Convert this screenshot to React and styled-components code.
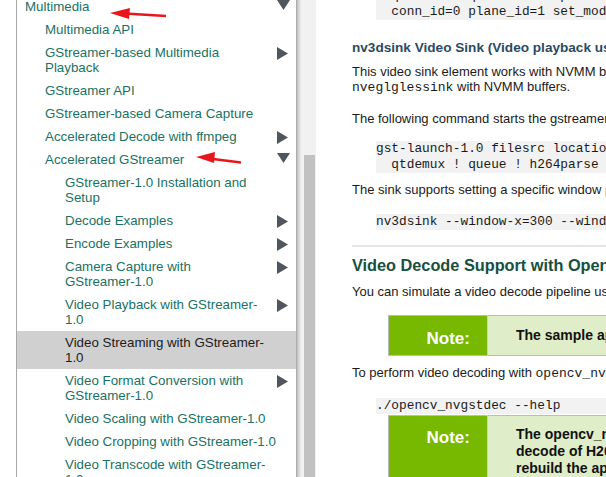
import React from "react";
import styled, { createGlobalStyle } from "styled-components";

const Global = createGlobalStyle`
  html, body { margin: 0; padding: 0; background: #fff; }
  body { font-family: "Liberation Sans", Arial, sans-serif; }
`;

const Page = styled.div`
  display: flex;
  width: 606px;
  height: 477px;
  overflow: hidden;
  background: #fff;
`;

const Gutter = styled.div`
  width: 16px;
  flex: none;
`;

const Sidebar = styled.nav`
  width: 279px;
  flex: none;
  border-left: 1px solid #a8a8a8;
  overflow: hidden;
  position: relative;
`;

const NavList = styled.ul`
  list-style: none;
  margin: -5px 0 0;
  padding: 0;
`;

const NavItem = styled.li`
  position: relative;
  padding: 4px ${(p) => (p.$toggle ? 35 : 17)}px 4px ${(p) => p.$indent}px;
  font-size: 13.33px;
  line-height: 15px;
  color: ${(p) => (p.$current ? "#1c1c1c" : "#1a7263")};
  background: ${(p) => (p.$current ? "#d0d0d0" : "transparent")};
`;

const Toggle = styled.svg`
  position: absolute;
  right: ${(p) => (p.$down ? 6 : 8)}px;
  top: ${(p) => (p.$down ? 5 : 6)}px;
  fill: #4f565d;
`;

const Edge = styled.div`
  width: 5px;
  flex: none;
  background: linear-gradient(to right, #a3a3a3, #cfcfcf 40%, #ececec);
`;

const Track = styled.div`
  width: 15px;
  flex: none;
  background: #f1f1f1;
  display: flex;
  justify-content: center;
  padding-top: 155px;
  box-sizing: border-box;
`;

const Thumb = styled.div`
  width: 11px;
  margin-left: 1px;
  height: 400px;
  background: #c1c1c1;
`;

const Main = styled.main`
  flex: 1;
  min-width: 0;
  overflow: hidden;
  padding-left: 36px;
  color: #1a1a1a;
`;

const Pre = styled.pre`
  margin: ${(p) => p.$mt}px 0 0 24px;
  padding: 0;
  background: #f2f2f2;
  font-family: "Liberation Mono", "Courier New", monospace;
  font-size: 12.8px;
  line-height: 16px;
  color: #1a1a1a;
  white-space: pre;
`;

const H3 = styled.h3`
  margin: ${(p) => p.$mt}px 0 0;
  font-size: 13.6px;
  line-height: 18px;
  font-weight: bold;
  color: #2a4a63;
  white-space: nowrap;
`;

const H2 = styled.h2`
  margin: ${(p) => p.$mt}px 0 0;
  font-size: 16.3px;
  line-height: 22px;
  font-weight: bold;
  color: #184f3e;
  white-space: nowrap;
`;

const P = styled.p`
  margin: ${(p) => p.$mt}px 0 0;
  font-size: 13px;
  line-height: 15px;
  white-space: nowrap;
`;

const Code = styled.code`
  font-family: "Liberation Mono", "Courier New", monospace;
  font-size: 13px;
`;

const Rule = styled.hr`
  margin: ${(p) => p.$mt}px 0 0;
  border: 0;
  border-top: 2px solid #e3e5e6;
`;

const NoteTable = styled.table`
  margin: ${(p) => p.$mt}px 0 0 36px;
  border-collapse: collapse;
  border: 1px solid #bcbcbc;
  width: 420px;
  table-layout: fixed;
`;

const NoteLabel = styled.td`
  width: 99px;
  background: #76b900;
  color: #fff;
  font-size: 17px;
  font-weight: bold;
  text-align: right;
  vertical-align: top;
  padding: ${(p) => p.$pt}px 17px 0 0;
  border-right: 1px solid #c6d9a8;
  height: ${(p) => p.$h}px;
  box-sizing: border-box;
`;

const NoteBody = styled.td`
  background: #dfeec8;
  color: #111;
  font-size: 14px;
  line-height: 17px;
  font-weight: bold;
  vertical-align: top;
  padding: ${(p) => p.$pt}px 0 0 28px;
  white-space: nowrap;
  overflow: hidden;
`;

const Annotations = styled.svg`
  position: absolute;
  left: 0;
  top: 0;
  pointer-events: none;
`;

const RightArrow = ({ down }) =>
  down ? (
    <Toggle $down width="13" height="10" viewBox="0 0 13 10">
      <polygon points="0,0 13,0 6.5,10" />
    </Toggle>
  ) : (
    <Toggle width="11" height="13" viewBox="0 0 11 13">
      <polygon points="0,0 11,6.5 0,13" />
    </Toggle>
  );

const items = [
  { t: "Multimedia", i: 8, a: "down" },
  { t: "Multimedia API", i: 28 },
  { t: "GStreamer-based Multimedia Playback", i: 28, a: "right" },
  { t: "GStreamer API", i: 28 },
  { t: "GStreamer-based Camera Capture", i: 28 },
  { t: "Accelerated Decode with ffmpeg", i: 28, a: "right" },
  { t: "Accelerated GStreamer", i: 28, a: "down" },
  { t: "GStreamer-1.0 Installation and Setup", i: 48 },
  { t: "Decode Examples", i: 48, a: "right" },
  { t: "Encode Examples", i: 48, a: "right" },
  { t: "Camera Capture with GStreamer-1.0", i: 48, a: "right" },
  { t: "Video Playback with GStreamer-1.0", i: 48, a: "right" },
  { t: "Video Streaming with GStreamer-1.0", i: 48, current: true },
  { t: "Video Format Conversion with GStreamer-1.0", i: 48, a: "right" },
  { t: "Video Scaling with GStreamer-1.0", i: 48 },
  { t: "Video Cropping with GStreamer-1.0", i: 48 },
  { t: "Video Transcode with GStreamer-1.0", i: 48 },
];

export default function App() {
  return (
    <>
      <Global />
      <Page>
        <Gutter />
        <Sidebar>
          <NavList>
            {items.map((it) => (
              <NavItem key={it.t} $indent={it.i} $current={it.current} $toggle={!!it.a}>
                {it.t}
                {it.a && <RightArrow down={it.a === "down"} />}
              </NavItem>
            ))}
          </NavList>
          <Annotations width="279" height="477" viewBox="0 0 279 477">
            <g fill="#e8171c" stroke="#e8171c">
              <line x1="108" y1="13.5" x2="149" y2="16" strokeWidth="2.4" />
              <polygon points="93,13 113,8 112,19" stroke="none" />
              <line x1="192" y1="158.5" x2="224" y2="162.5" strokeWidth="2.4" />
              <polygon points="179,157 198,152 197,163" stroke="none" />
            </g>
          </Annotations>
        </Sidebar>
        <Edge />
        <Track>
          <Thumb />
        </Track>
        <Main>
          <Pre $mt={-12}>
            {"  qtdemux ! queue ! h264parse ! nvv4l2decoder ! nvdrmvideosink \\\n  conn_id=0 plane_id=1 set_mode=0 -e"}
          </Pre>
          <H3 $mt={19}>nv3dsink Video Sink (Video playback using 3D graphics API)</H3>
          <P $mt={7}>
            This video sink element works with NVMM buffers and renders using 3D graphics API.
            <br />
            <Code>nveglglessink</Code> with NVMM buffers.
          </P>
          <P $mt={16}>The following command starts the gstreamer pipeline using nv3dsink:</P>
          <Pre $mt={15}>
            {"gst-launch-1.0 filesrc location=<filename_h264.mp4> ! \\\n  qtdemux ! queue ! h264parse ! nvv4l2decoder ! nv3dsink -e"}
          </Pre>
          <P $mt={9}>The sink supports setting a specific window position and dimensions using the properties:</P>
          <Pre $mt={17}>{"nv3dsink --window-x=300 --window-y=300 --window-width=512 --window-height=512"}</Pre>
          <Rule $mt={15} />
          <H2 $mt={7}>Video Decode Support with OpenCV</H2>
          <P $mt={8}>You can simulate a video decode pipeline using the GStreamer-1.0 based OpenCV sample.</P>
          <NoteTable $mt={16}>
            <tbody>
              <tr>
                <NoteLabel $pt={13} $h={40}>Note:</NoteLabel>
                <NoteBody $pt={11}>The sample application is available in the Jetson Linux sources.</NoteBody>
              </tr>
            </tbody>
          </NoteTable>
          <P $mt={9}>
            To perform video decoding with <Code>opencv_nvgstdec</Code>, run the following command:
          </P>
          <Pre $mt={17}>{"./opencv_nvgstdec --help"}</Pre>
          <NoteTable $mt={1}>
            <tbody>
              <tr>
                <NoteLabel $pt={12} $h={120}>Note:</NoteLabel>
                <NoteBody $pt={10}>
                  The opencv_nvgstdec application currently supports only
                  <br />
                  decode of H264. To decode other formats you must
                  <br />
                  rebuild the application with the appropriate
                  <br />
                  different parser and caps.
                </NoteBody>
              </tr>
            </tbody>
          </NoteTable>
        </Main>
      </Page>
    </>
  );
}
